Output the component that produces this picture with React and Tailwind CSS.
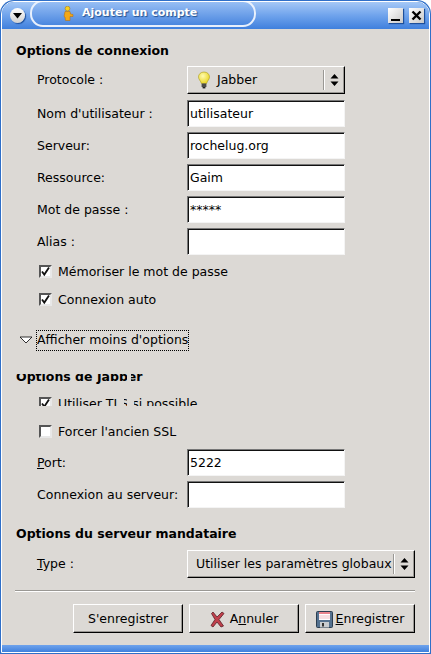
import React from 'react'

const font = "font-['DejaVu_Sans',sans-serif]"

const raised = 'border border-t-white border-l-white border-r-black border-b-black bg-[#dcd9d5] shadow-[inset_-1px_-1px_0_#9a9894]'

const Heading = ({ children }) => (
  <div className="h-5 flex items-center pl-[13px] text-[12.5px] font-bold text-black whitespace-nowrap">{children}</div>
)

const Field = ({ label, value }) => (
  <div className="h-8 flex items-center pl-[34px] pt-[1px]">
    <div className="w-[150px] pt-[1px] text-[12.5px] text-black">{label}</div>
    <div className="w-[158px] h-[27px] flex items-center pl-[2px] pt-[1px] bg-white text-[12.5px] text-black border border-t-[#777] border-l-[#777] border-r-[#f4f4f4] border-b-[#f4f4f4] shadow-[inset_1px_1px_0_#111]">
      {value}
    </div>
  </div>
)

const Check = ({ label, checked }) => (
  <div className="h-7 flex items-center pl-[36px] text-[12.5px] text-black">
    <div className="w-[13px] h-[13px] bg-white border-2 border-t-[#555] border-l-[#555] border-r-[#e8e8e8] border-b-[#e8e8e8] flex items-center justify-center">
      {checked && (
        <svg width="11" height="11" viewBox="0 0 11 11" className="shrink-0">
          <path d="M2 5.5 L4.3 8.6 L9 1.5" fill="none" stroke="#111" strokeWidth="1.8" />
        </svg>
      )}
    </div>
    <span className="ml-[6px] pt-[2px] whitespace-nowrap">{label}</span>
  </div>
)

const Arrows = () => (
  <svg width="9" height="14" viewBox="0 0 9 14">
    <path d="M4.5 1 L8.5 5.5 L0.5 5.5 Z M0.5 8.5 L8.5 8.5 L4.5 13 Z" fill="#000" />
  </svg>
)

const Bulb = () => (
  <svg width="14" height="18" viewBox="0 0 14 18">
    <defs>
      <radialGradient id="bulb" cx="0.4" cy="0.35" r="0.7">
        <stop offset="0" stopColor="#fffbb0" />
        <stop offset="1" stopColor="#e8d21c" />
      </radialGradient>
    </defs>
    <path d="M7 1 C3.5 1 1.5 3.4 1.5 6 C1.5 8.4 3.8 10 4.4 12.5 L9.6 12.5 C10.2 10 12.5 8.4 12.5 6 C12.5 3.4 10.5 1 7 1 Z" fill="url(#bulb)" stroke="#a89a20" strokeWidth="0.6" />
    <rect x="4.6" y="12.5" width="4.8" height="3.5" fill="#4a4a48" />
    <rect x="5.6" y="16" width="2.8" height="1.4" fill="#222" />
  </svg>
)

const Person = () => (
  <svg width="11" height="15" viewBox="0 0 11 15">
    <circle cx="4.5" cy="2.6" r="2.4" fill="#f7d020" stroke="#a87400" strokeWidth="0.5" />
    <path d="M2 5.5 L7 5.5 L7.5 8 L10 8.5 L10 10.5 L7 10.5 L7 14.5 L2.5 14.5 L2 11 L1 10.5 Z" fill="#f2a818" stroke="#b86a00" strokeWidth="0.5" />
  </svg>
)

const RedX = () => (
  <svg width="15" height="17" viewBox="0 0 15 17">
    <path d="M3 1 L7 6 L12 1 L14 2.5 L9 8.5 L13.5 15 L11 16 L7 11 L3 16 L1 14.5 L5 8.5 L1.5 2.5 Z" fill="#c0404c" stroke="#5a2026" strokeWidth="0.8" />
  </svg>
)

const Floppy = () => (
  <svg width="17" height="17" viewBox="0 0 17 17">
    <rect x="0.5" y="0.5" width="16" height="16" rx="1" fill="#54718f" stroke="#2c3e50" />
    <rect x="3" y="1" width="11" height="8" fill="#fff" />
    <path d="M3 1 H14 V3 H3 Z" fill="#e8848c" />
    <path d="M3 5 H14 M3 7 H14" stroke="#e8a8ac" strokeWidth="0.7" />
    <rect x="4" y="11" width="9" height="5.5" fill="#c8ccd0" />
    <rect x="6" y="12" width="2" height="3.5" fill="#333" />
  </svg>
)

const Button = ({ width, children }) => (
  <div className={`${width} h-[29px] pt-[1px] flex items-center justify-center text-[12.5px] text-black whitespace-nowrap ${raised}`}>
    {children}
  </div>
)

export default function App() {
  return (
    <div className={`${font} w-[431px] h-[654px] overflow-hidden relative bg-white`}>
      <div className="absolute inset-0 rounded-t-[14px] bg-[#2f6fc8] p-[1px]">
        <div className="h-full rounded-t-[13px] border border-white bg-[#2f6fc8] flex flex-col overflow-hidden">
          {/* title bar */}
          <div className="h-[27px] shrink-0 relative flex items-center bg-gradient-to-b from-[#a5c8f6] via-[#6fa3ec] to-[#3f80dd]">
            <div className="ml-[8px] w-[15px] h-[15px] rounded-full bg-gradient-to-b from-white to-[#d0d0d0] shadow-[1px_1px_1px_#1d4f9c] flex items-center justify-center">
              <svg width="9" height="6" viewBox="0 0 9 6"><path d="M0 0 H9 L4.5 5.5 Z" fill="#000" /></svg>
            </div>
            <div className="absolute left-[28px] top-[-2px] w-[226px] h-[27px] rounded-[13px] border-2 border-[#e8f0fc] bg-gradient-to-b from-[#97bef4] to-[#4a87df] flex items-center pl-[31px] gap-[8px]">
              <Person />
              <span className="text-[11px] font-bold text-white whitespace-nowrap [text-shadow:1px_1px_1px_#20508f]">Ajouter un compte</span>
            </div>
            <div className="ml-auto flex gap-[6px] mr-[5px]">
              <div className="w-[15px] h-[15px] bg-gradient-to-br from-white to-[#c8c8c8] shadow-[1px_1px_1px_#1d4f9c] flex items-end justify-center pb-[2px]">
                <div className="w-[9px] h-[2px] bg-black" />
              </div>
              <div className="w-[15px] h-[15px] bg-gradient-to-br from-white to-[#c8c8c8] shadow-[1px_1px_1px_#1d4f9c] flex items-center justify-center">
                <svg width="11" height="11" viewBox="0 0 11 11"><path d="M1.5 1.5 L9.5 9.5 M9.5 1.5 L1.5 9.5" stroke="#000" strokeWidth="2.4" /></svg>
              </div>
            </div>
          </div>

          {/* dialog body */}
          <div className="h-[616px] shrink-0 bg-[#dcd9d5] border-l border-r border-[#dcd9d5] pt-[12px]">
            <Heading>Options de connexion</Heading>
            <div className="mt-[5px] flex items-center pl-[34px] h-7">
              <div className="w-[150px] pt-[1px] text-[12.5px] text-black">Protocole :</div>
              <div className={`w-[158px] h-7 flex items-center pl-[9px] text-[12.5px] text-black ${raised}`}>
                <Bulb />
                <span className="ml-[6px] pt-[1px]">Jabber</span>
                <div className="ml-auto h-[20px] flex items-center">
                  <div className="h-full w-[2px] border-l border-[#9a9894] border-r border-r-white" />
                  <div className="w-[19px] flex justify-center"><Arrows /></div>
                </div>
              </div>
            </div>
            <div className="mt-[3px]">
              <Field label="Nom d'utilisateur :" value="utilisateur" />
              <Field label="Serveur:" value="rochelug.org" />
              <Field label="Ressource:" value="Gaim" />
              <Field label="Mot de passe :" value="*****" />
              <Field label="Alias :" value="" />
            </div>
            <Check label="Mémoriser le mot de passe" checked />
            <Check label="Connexion auto" checked />

            <div className="mt-[14px] h-[26px] flex items-center pl-[16px]">
              <svg width="14" height="8" viewBox="0 0 14 8"><path d="M1 1 H13 L7 7 Z" fill="#fff" stroke="#000" strokeWidth="0.8" /></svg>
              <span className="ml-[3px] h-[21px] flex items-center border border-dotted border-black text-[12.5px] text-black whitespace-nowrap">Afficher moins d'options</span>
            </div>

            {/* half repainted rows, as in the screenshot */}
            <div className="mt-[21px] h-[12px] overflow-hidden relative">
              <div className="-mt-[7px]"><Heading>Options de Jabber</Heading></div>
              <div className="absolute left-[124px] top-0 w-[4px] h-[12px] bg-[#dcd9d5]" />
            </div>
            <div className="mt-[3px] h-[17px] overflow-hidden relative">
              <Check label="Utiliser TLS si possible" checked />
              <div className="absolute left-[116px] top-0 w-[5px] h-[17px] bg-[#dcd9d5]" />
              <div className="absolute left-[124px] top-0 w-[7px] h-[17px] bg-[#dcd9d5]" />
            </div>
            <div className="mt-[11px]">
              <Check label="Forcer l'ancien SSL" />
            </div>
            <div className="mt-[1px]">
              <Field label={<><span className="underline">P</span>ort:</>} value="5222" />
              <Field label="Connexion au serveur:" value="" />
            </div>

            <div className="mt-[14px]"><Heading>Options du serveur mandataire</Heading></div>
            <div className="mt-[6px] flex items-center pl-[34px] h-7">
              <div className="w-[150px] pt-[1px] text-[12.5px] text-black"><span className="underline">T</span>ype :</div>
              <div className={`w-[228px] h-7 flex items-center pl-[8px] text-[12.5px] text-black whitespace-nowrap ${raised}`}>
                <span className="pt-[1px]">Utiliser les paramètres globaux</span>
                <div className="ml-auto h-[20px] flex items-center">
                  <div className="h-full w-[2px] border-l border-[#9a9894] border-r border-r-white" />
                  <div className="w-[19px] flex justify-center"><Arrows /></div>
                </div>
              </div>
            </div>

            <div className="mt-[12px] ml-[12px] w-[400px] h-[2px] border-t border-[#9a9894] border-b border-b-white" />

            <div className="mt-[12px] flex justify-end gap-[6px] pr-[13px]">
              <Button width="w-[110px]">S'enregistrer</Button>
              <Button width="w-[110px]">
                <RedX />
                <span className="ml-[5px]">A<span className="underline">n</span>nuler</span>
              </Button>
              <Button width="w-[110px]">
                <Floppy />
                <span className="ml-[3px]"><span className="underline">E</span>nregistrer</span>
              </Button>
            </div>
          </div>

          <div className="flex-1 bg-gradient-to-b from-[#6fa3ec] to-[#3f80dd]" />
        </div>
      </div>
    </div>
  )
}
